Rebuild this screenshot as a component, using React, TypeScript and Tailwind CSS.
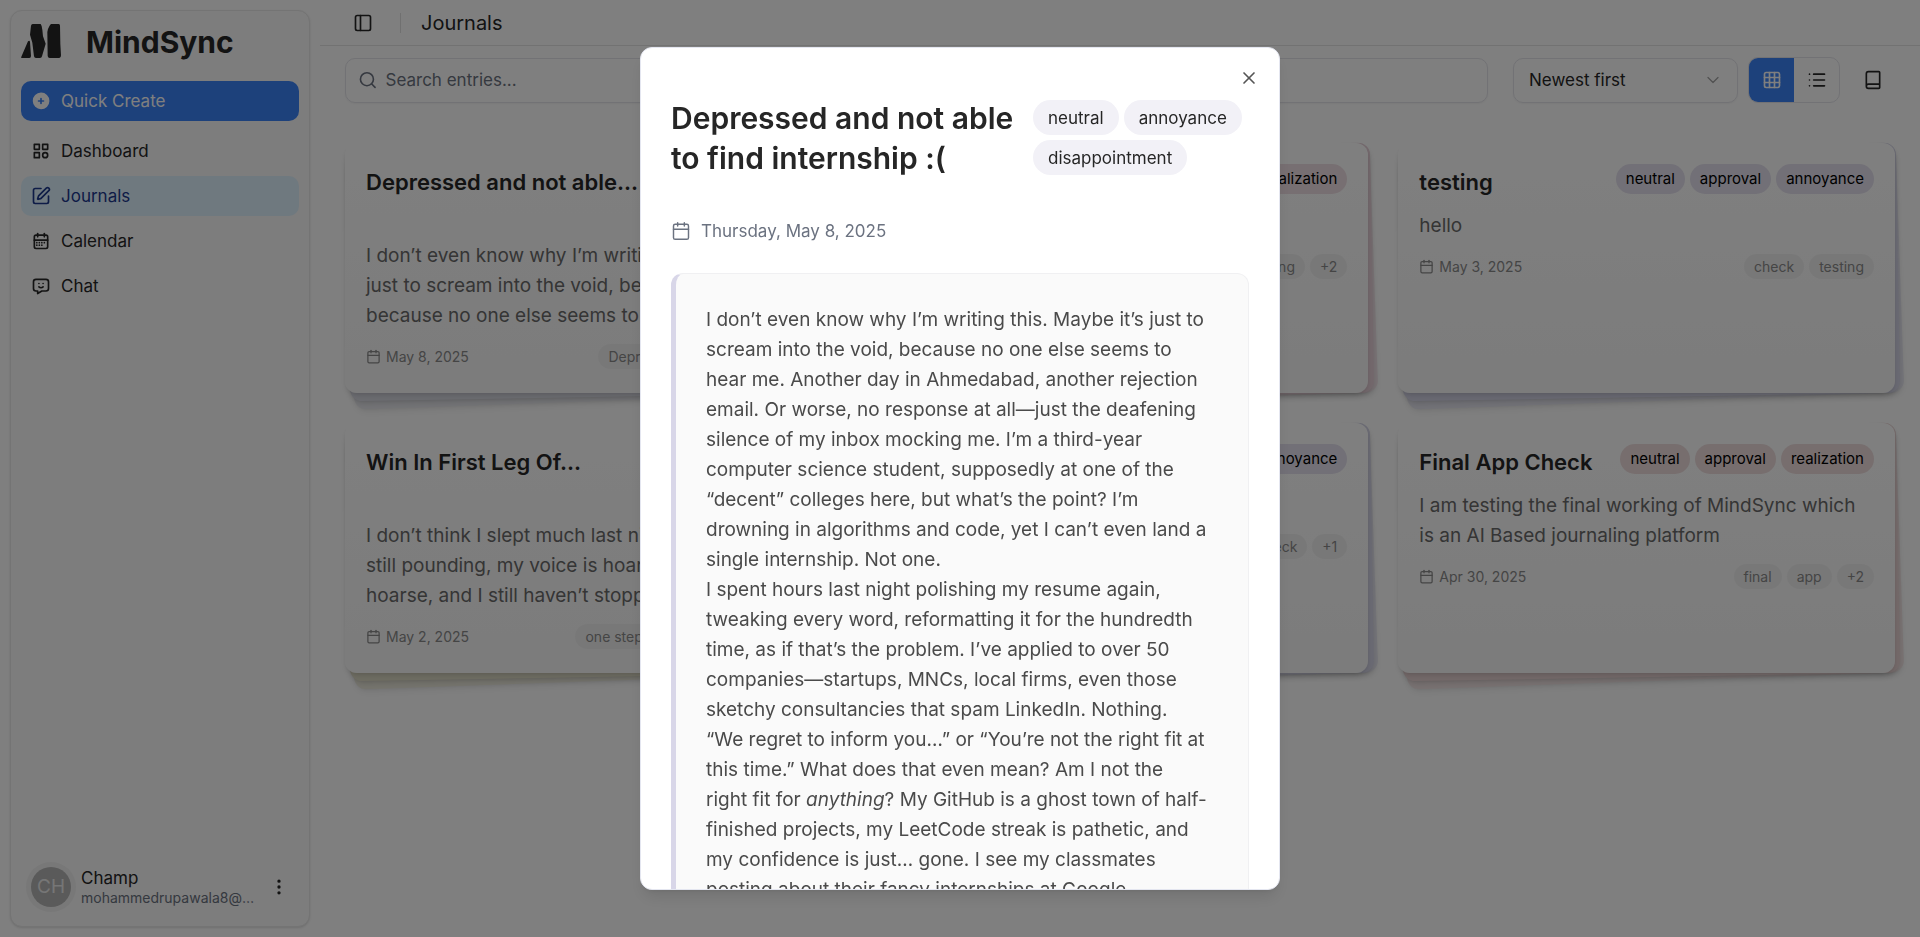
import React from "react";
import { Calendar, Search, X, ChevronDown, Book, List, SquarePen } from "lucide-react";
import {
  TbCalendarMonth,
  TbCategory,
  TbCirclePlusFilled,
  TbDotsVertical,
  TbMessageChatbot,
} from "react-icons/tb";
import { LuGrid3X3, LuPanelLeft } from "react-icons/lu";

type Tone = "slate" | "rose" | "violet" | "lime" | "red";

const toneClasses: Record<Tone, { page: string; pill: string }> = {
  slate: { page: "bg-[#d8d9e2]", pill: "bg-[#e6e6f0]" },
  rose: { page: "bg-[#e6d0d8]", pill: "bg-[#efdfe4]" },
  violet: { page: "bg-[#d4d4e6]", pill: "bg-[#e4e1ee]" },
  lime: { page: "bg-[#dedbc6]", pill: "bg-[#eeecd8]" },
  red: { page: "bg-[#e8d3d3]", pill: "bg-[#eedddd]" },
};

interface Entry {
  title: string;
  moods: string[];
  lines: string[];
  date: string;
  tags: string[];
  tone: Tone;
  tall?: boolean;
}

const entries: Entry[] = [
  {
    title: "Depressed and not able…",
    moods: ["neutral", "annoyance"],
    lines: [
      "I don’t even know why I’m writing this. Maybe",
      "just to scream into the void, because",
      "because no one else seems to hear me.",
    ],
    date: "May 8, 2025",
    tags: ["Depressed", "internship", "+1"],
    tone: "slate",
    tall: true,
  },
  {
    title: "Testing",
    moods: ["neutral", "realization"],
    lines: ["Testing"],
    date: "May 5, 2025",
    tags: ["testing", "+2"],
    tone: "rose",
  },
  {
    title: "testing",
    moods: ["neutral", "approval", "annoyance"],
    lines: ["hello"],
    date: "May 3, 2025",
    tags: ["check", "testing"],
    tone: "violet",
  },
  {
    title: "Win In First Leg Of…",
    moods: ["neutral", "excitement"],
    lines: [
      "I don’t think I slept much last night.",
      "still pounding, my voice is hoarse",
      "hoarse, and I still haven’t stopped",
    ],
    date: "May 2, 2025",
    tags: ["one step closer", "football", "+10"],
    tone: "lime",
    tall: true,
  },
  {
    title: "Check",
    moods: ["neutral", "annoyance"],
    lines: ["Check"],
    date: "May 1, 2025",
    tags: ["check", "+1"],
    tone: "violet",
  },
  {
    title: "Final App Check",
    moods: ["neutral", "approval", "realization"],
    lines: ["I am testing the final working of MindSync which", "is an AI Based journaling platform"],
    date: "Apr 30, 2025",
    tags: ["final", "app", "+2"],
    tone: "red",
  },
];

const navItems = [
  { label: "Dashboard", Icon: TbCategory },
  { label: "Journals", Icon: SquarePen, active: true },
  { label: "Calendar", Icon: TbCalendarMonth },
  { label: "Chat", Icon: TbMessageChatbot },
];

const journalLines: React.ReactNode[] = [
  "I don’t even know why I’m writing this. Maybe it’s just to",
  "scream into the void, because no one else seems to",
  "hear me. Another day in Ahmedabad, another rejection",
  "email. Or worse, no response at all—just the deafening",
  "silence of my inbox mocking me. I’m a third-year",
  "computer science student, supposedly at one of the",
  "“decent” colleges here, but what’s the point? I’m",
  "drowning in algorithms and code, yet I can’t even land a",
  "single internship. Not one.",
  "I spent hours last night polishing my resume again,",
  "tweaking every word, reformatting it for the hundredth",
  "time, as if that’s the problem. I’ve applied to over 50",
  "companies—startups, MNCs, local firms, even those",
  "sketchy consultancies that spam LinkedIn. Nothing.",
  "“We regret to inform you…” or “You’re not the right fit at",
  "this time.” What does that even mean? Am I not the",
  <>
    right fit for <em>anything</em>? My GitHub is a ghost town of half-
  </>,
  "finished projects, my LeetCode streak is pathetic, and",
  "my confidence is just… gone. I see my classmates",
  "posting about their fancy internships at Google,",
];

function Logo() {
  return (
    <svg viewBox="0 0 120 102" className="h-[34px] w-10 fill-[#262626]" aria-hidden="true">
      <path d="M1 102 Q0 100 1 98 L21 52 Q26 47 27 54 L30 96 Q30 102 25 102Z" />
      <path d="M35 0 H59 Q63 5 64 17 L66 37 L74 59 L63 97 Q62 102 57 102 H45 Q40 102 39 97 L34 56 L27 32 L30 5 Q31 1 35 0Z" />
      <path d="M90 0 H113 Q117 0 117 5 L118 60 L120 94 Q120 102 115 102 H86 Q81 102 80 96 L79 24 Q80 15 85 7 Q87 2 90 0Z" />
    </svg>
  );
}

function Sidebar() {
  return (
    <aside className="h-screen w-80 shrink-0 p-[10px]">
      <div className="flex h-full flex-col rounded-xl border border-[#e8e8e8] bg-[#fafafa] px-[10px] pb-[14px] shadow">
        <div className="flex h-[60px] items-center gap-[25px]">
          <Logo />
          <span className="pt-[2px] text-[30px] leading-10 font-bold">MindSync</span>
        </div>
        <button className="mt-[10px] flex h-10 items-center gap-[10px] rounded-[10px] bg-[#3b82f6] px-[10px] text-[17px] text-white">
          <TbCirclePlusFilled size={20} />
          <span className="pt-[2px]">Quick Create</span>
        </button>
        <nav className="mt-[10px] flex flex-col gap-[5px]">
          {navItems.map(({ label, Icon, active }) => (
            <a
              key={label}
              href="#"
              className={
                "flex h-10 items-center gap-[10px] rounded-[10px] px-[10px] text-[17px] " +
                (active ? "bg-[#dff2fe] text-[#1c398e]" : "")
              }
            >
              <Icon size={20} />
              <span className="pt-[2px]">{label}</span>
            </a>
          ))}
        </nav>
        <div className="mt-auto flex h-[50px] items-center gap-[5px] pl-[5px]">
          <div className="flex size-[50px] shrink-0 items-center justify-center rounded-full bg-[#f0f0f0]">
            <div className="flex size-10 items-center justify-center rounded-full bg-[#b4b4b4] text-[19px] text-[#ececec]">CH</div>
          </div>
          <div className="min-w-0 flex-1 pt-[2px]">
            <div className="text-[17px] leading-5">Champ</div>
            <div className="truncate text-[14px] leading-5 text-[#6b7280]">mohammedrupawala8@gmail.com</div>
          </div>
          <button aria-label="Account menu" className="mr-[10px] ml-[5px]">
            <TbDotsVertical size={20} />
          </button>
        </div>
      </div>
    </aside>
  );
}

function EntryCard({ entry }: { entry: Entry }) {
  const tone = toneClasses[entry.tone];
  return (
    <article className="relative h-[250px]">
      <div className={"absolute inset-0 translate-x-[5px] translate-y-[8px] -rotate-2 rounded-xl opacity-60 shadow-md " + tone.page} />
      <div className={"absolute inset-0 translate-x-[3px] translate-y-[4px] -rotate-1 rounded-xl shadow-md " + tone.page} />
      <div className="relative h-full rounded-xl bg-linear-to-b from-white to-[#f8f8f8] p-[21px] shadow-md">
        <div className={"flex justify-between gap-2 " + (entry.tall ? "h-[70px]" : "h-10")}>
          <h2 className="pt-[3px] text-[22px] leading-[30px] font-semibold whitespace-nowrap">{entry.title}</h2>
          <div className={"flex gap-[5px] " + (entry.tall ? "flex-wrap content-start justify-end" : "")}>
            {entry.moods.map((mood) => (
              <span key={mood} className={"h-[30px] rounded-full px-[10px] text-[15px] leading-[30px] text-black " + tone.pill}>
                {mood}
              </span>
            ))}
          </div>
        </div>
        <p className="mt-[7px] text-[19px] leading-[30px] text-[#6a6a6a]">
          {entry.lines.map((line) => (
            <span key={line} className="block whitespace-nowrap">
              {line}
            </span>
          ))}
        </p>
        <div className="mt-[13px] flex items-center justify-between text-[14px] text-[#8a8a8a]">
          <span className="flex items-center gap-[5px]">
            <Calendar size={15} />
            {entry.date}
          </span>
          <div className="flex gap-[5px]">
            {entry.tags.map((tag) => (
              <span key={tag} className="h-[25px] rounded-full bg-[#f1f1f1] px-[10px] leading-[25px] whitespace-nowrap">
                {tag}
              </span>
            ))}
          </div>
        </div>
      </div>
    </article>
  );
}

function Toolbar() {
  return (
    <div className="flex items-center">
      <label className="flex h-[45px] flex-1 items-center gap-2 rounded-[10px] border border-[#e4e4ea] px-[12px] text-[#6b7280] shadow-xs">
        <Search size={20} />
        <input
          type="search"
          aria-label="Search entries"
          placeholder="Search entries..."
          className="w-full bg-transparent pt-[2px] text-[17px] outline-none placeholder:text-[#6b7280]"
        />
      </label>
      <div className="relative ml-[25px] w-[225px]">
        <select
          aria-label="Sort order"
          className="h-[45px] w-full appearance-none rounded-[10px] border border-[#e4e4ea] bg-transparent px-[15px] pt-[2px] text-[17px] shadow-xs"
        >
          <option>Newest first</option>
        </select>
        <ChevronDown size={20} className="pointer-events-none absolute top-3 right-[15px] text-[#a3a3a3]" strokeWidth={1.5} />
      </div>
      <div className="ml-[10px] flex h-[46px] w-[92px] overflow-hidden rounded-[10px] border border-[#e4e4ea]">
        <button aria-label="Grid view" className="flex flex-1 items-center justify-center bg-[#3b82f6] text-white">
          <LuGrid3X3 size={20} />
        </button>
        <button aria-label="List view" className="flex flex-1 items-center justify-center">
          <List size={20} />
        </button>
      </div>
      <button aria-label="Journal book" className="ml-[10px] flex size-[46px] items-center justify-center">
        <Book size={20} />
      </button>
    </div>
  );
}

function EntryDialog() {
  return (
    <div className="fixed inset-0 flex items-center justify-center bg-black/50">
      <div
        role="dialog"
        aria-modal="true"
        aria-labelledby="entry-title"
        className="relative h-[90vh] w-full max-w-[640px] overflow-hidden rounded-xl border border-[#e4e6f0] bg-white px-[30px] pt-[50px] shadow-lg"
      >
        <button aria-label="Close" className="absolute top-5 right-5 text-[#555]">
          <X size={20} />
        </button>
        <div className="flex gap-[20px]">
          <h1 id="entry-title" className="w-[342px] shrink-0 text-[30px] leading-10 font-semibold">
            <span className="block whitespace-nowrap">Depressed and not able</span>
            <span className="block whitespace-nowrap">to find internship :(</span>
          </h1>
          <div className="flex flex-wrap content-start gap-[5px] pt-[2px]">
            {["neutral", "annoyance", "disappointment"].map((mood) => (
              <span key={mood} className="h-[35px] rounded-full bg-[#f2f1f7] px-[15px] text-[17px] leading-[36px]">
                {mood}
              </span>
            ))}
          </div>
        </div>
        <div className="mt-[41px] flex h-[25px] items-center gap-[10px] text-[17px] text-[#6b7280]">
          <Calendar size={20} strokeWidth={1.75} />
          Thursday, May 8, 2025
        </div>
        <div className="mt-[29px] rounded-xl border border-l-[5px] border-[#f0f0f2] border-l-[#d8d6e8] bg-[#fafafa] px-[30px] pt-[31px] text-[19px] leading-[30px] text-[#4a4a4a]">
          {journalLines.map((line, i) => (
            <span key={i} className="block whitespace-nowrap">
              {line}
            </span>
          ))}
        </div>
      </div>
    </div>
  );
}

export default function App() {
  return (
    <div className="flex min-h-screen bg-white font-['Inter',sans-serif] text-[#262626]">
      <Sidebar />
      <div className="min-w-0 flex-1">
        <header className="flex h-[46px] items-center border-b border-[#e5e5e5] pl-[33px]">
          <button aria-label="Toggle sidebar">
            <LuPanelLeft size={20} />
          </button>
          <span className="ml-[27px] h-5 w-px bg-[#e0e0e0]" />
          <span className="ml-5 text-[20px]">Journals</span>
        </header>
        <main className="pt-[11px] pr-6 pl-[25px]">
          <Toolbar />
          <div className="mt-10 grid grid-cols-3 gap-[30px] pr-px">
            {entries.map((entry) => (
              <EntryCard key={entry.title} entry={entry} />
            ))}
          </div>
        </main>
      </div>
      <EntryDialog />
    </div>
  );
}
